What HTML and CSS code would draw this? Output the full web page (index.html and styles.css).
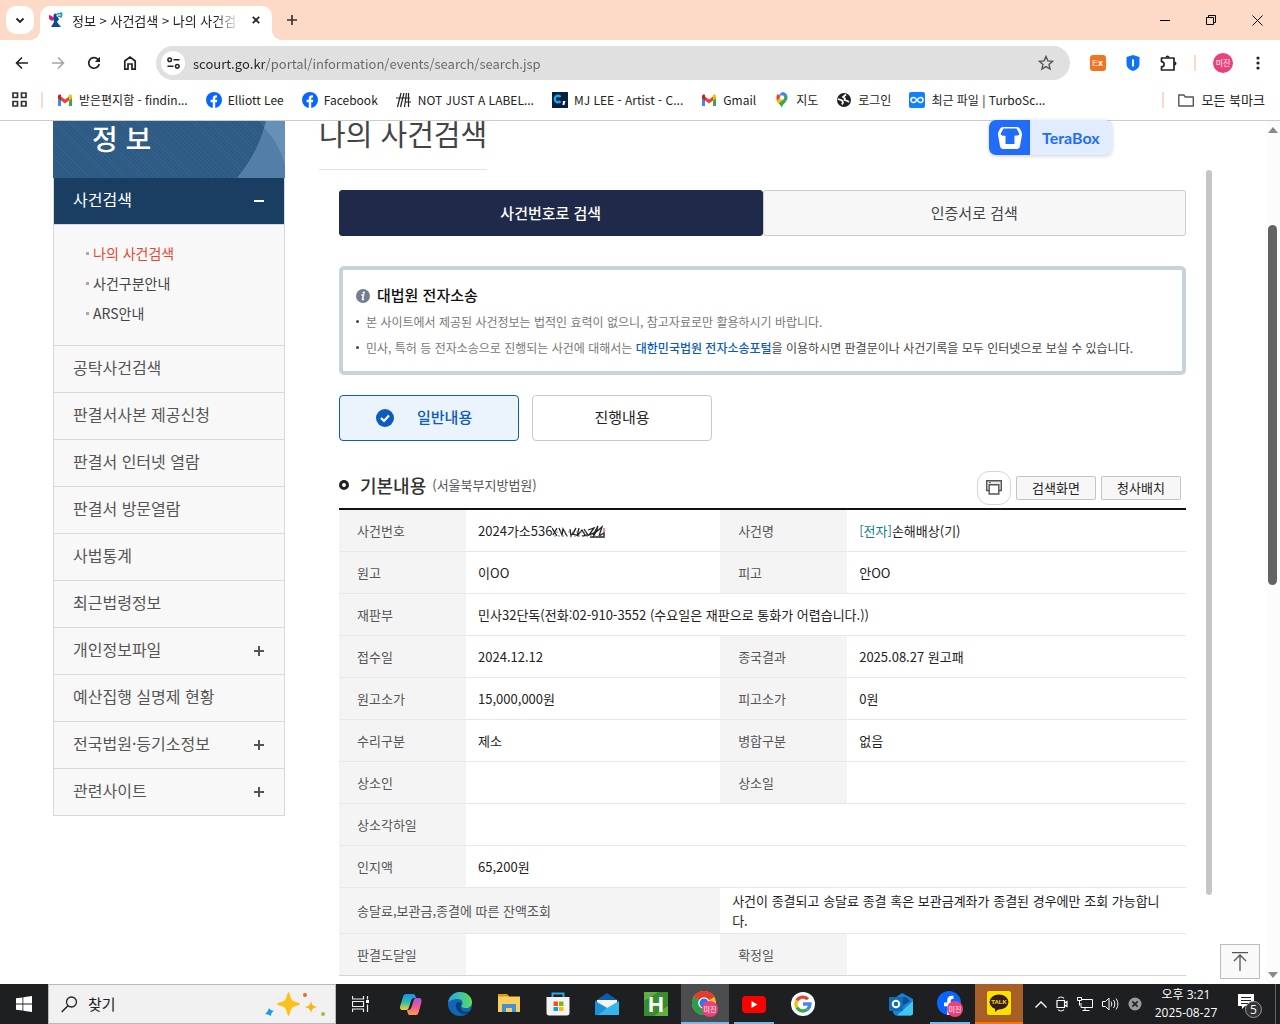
FILE: index.html
```
<!doctype html>
<html lang="ko">
<head>
    <meta charset="utf-8">
    <title>정보 &gt; 사건검색 &gt; 나의 사건검색</title>
    <link rel="stylesheet" href="styles.css">
</head>
<body>
    <!-- tab strip -->
    <div class="tabstrip">
        <button class="tab-search" aria-label="탭 검색"><svg width="10" height="10" viewBox="0 0 10 10"><path d="M1.5 3.5L5 7l3.5-3.500" fill="none" stroke="#222" stroke-width="1.800"/></svg></button>
        <div class="tab">
            <svg class="favicon" width="16" height="16" viewBox="0 0 16 16"><path d="M5 6l4-2 2 3-2 3 4 5H3l3-5z" fill="#0b4a94"/><path d="M6 1.500l3 .5-1 3-3 2z" fill="#0b4a94"/><path d="M1 3l3 1 2 3-2 2-3-2z" fill="#e0197d"/><path d="M9 2l5-1M10 4l4 1M14 1l-1 4M12 1l2 3" stroke="#16a0a8" stroke-width="1.300"/></svg>
            <span class="tab-title">정보 &gt; 사건검색 &gt; 나의 사건검색</span>
            <button class="tab-close" aria-label="탭 닫기"><svg width="8" height="8" viewBox="0 0 8 8"><path d="M.8.8l6.400 6.400M7.200.8L.8 7.200" stroke="#222" stroke-width="1.700"/></svg></button>
        </div>
        <button class="tab-new" aria-label="새 탭"><svg width="12" height="12" viewBox="0 0 12 12"><path d="M6 1v10M1 6h10" stroke="#333" stroke-width="1.700"/></svg></button>
        <div class="win-btns">
            <button aria-label="최소화"><svg width="10" height="10"><path d="M0 5.500h10" stroke="#000"/></svg></button>
            <button aria-label="이전 크기로"><svg width="10" height="10"><path d="M.5 2.500h7v7h-7zM2.500 2.500v-2h7v7h-2" fill="none" stroke="#000"/></svg></button>
            <button aria-label="닫기"><svg width="11" height="11"><path d="M.5.5l10 10M10.500.5l-10 10" stroke="#000"/></svg></button>
        </div>
    </div>

    <!-- toolbar -->
    <div class="toolbar">
        <button aria-label="뒤로"><svg width="14" height="14" viewBox="0 0 14 14"><path d="M13 7H2M7 1.500L1.500 7 7 12.500" fill="none" stroke="#222" stroke-width="1.600"/></svg></button>
        <button aria-label="앞으로"><svg width="14" height="14" viewBox="0 0 14 14"><path d="M1 7h11M7 1.500L12.500 7 7 12.500" fill="none" stroke="#a5a5a5" stroke-width="1.600"/></svg></button>
        <button aria-label="새로고침"><svg width="14" height="14" viewBox="0 0 14 14"><path d="M12.200 8A5.300 5.300 0 1 1 10.800 3.200L12 4.500" fill="none" stroke="#222" stroke-width="1.700"/><path d="M13 .8V6H7.800z" fill="#222"/></svg></button>
        <button aria-label="홈"><svg width="14" height="16" viewBox="0 0 14 16"><path d="M1.800 6L7 2l5.200 4v8.200H9V9H5v5.200H1.800z" fill="none" stroke="#222" stroke-width="1.700"/></svg></button>
        <div class="omnibox">
            <button class="site-info" aria-label="사이트 정보"><svg width="13" height="12" viewBox="0 0 13 12"><g fill="none" stroke="#222" stroke-width="1.500"><circle cx="2.700" cy="2.700" r="1.800"/><path d="M6.500 2.700h6M.5 9.300h6"/><circle cx="10.300" cy="9.300" r="1.800"/></g></svg></button>
            <input class="url" type="text" aria-label="주소창" value="scourt.go.kr/portal/information/events/search/search.jsp">
            <button class="star" aria-label="북마크"><svg width="16" height="16" viewBox="0 0 16 16"><path d="M8 1.500l1.900 4.400 4.700.4-3.600 3.100 1.100 4.700L8 11.600l-4.100 2.500L5 9.400 1.400 6.300l4.700-.4z" fill="none" stroke="#555" stroke-width="1.400"/></svg></button>
        </div>
        <div class="ext">
            <button aria-label="EX 확장"><svg width="16" height="16" viewBox="0 0 16 16"><rect width="16" height="16" rx="3" fill="#f27421"/><text x="2" y="11" font-size="9" fill="#fbc9a4" font-family="Liberation Sans, sans-serif" font-weight="bold">E<tspan fill="#fff">x</tspan></text></svg></button>
            <button aria-label="보안 확장"><svg width="14" height="16" viewBox="0 0 14 16"><path d="M7 0l6.500 2v7c0 3.500-3 6-6.500 7-3.500-1-6.500-3.500-6.500-7V2z" fill="#0f73f7"/><path d="M7 4.500v7" stroke="#fff" stroke-width="2"/></svg></button>
            <button aria-label="확장 프로그램"><svg width="17" height="17" viewBox="0 0 17 17"><path d="M1.500 3h12.500v12H1.500v-3.200a2.600 2.600 0 0 0 0-5.200z" fill="none" stroke="#222" stroke-width="1.700" stroke-linejoin="round"/><path d="M5.500 2.500a2 2 0 0 1 4 0zM14.500 6.500a2 2 0 0 1 0 4z" fill="#222"/></svg></button>
            <span class="bar"></span>
            <button class="avatar" aria-label="프로필">미진</button>
            <button class="menu" aria-label="메뉴"><svg width="4" height="14" viewBox="0 0 4 14" fill="#222"><circle cx="2" cy="2" r="1.600"/><circle cx="2" cy="7" r="1.600"/><circle cx="2" cy="12" r="1.600"/></svg></button>
        </div>
    </div>

    <!-- bookmarks -->
    <div class="bookmarks">
        <button class="apps" aria-label="앱"><svg width="15" height="15" viewBox="0 0 15 15"><path d="M1 1h4.500v4.500H1zM9.500 1H14v4.500H9.500zM1 9.500h4.500V14H1zM9.500 9.500H14V14H9.500z" fill="none" stroke="#333" stroke-width="1.700"/></svg></button>
        <span class="bar"></span>
        <a href="#"><svg width="16" height="16" viewBox="0 0 16 16"><path d="M1 14V4h3v10z" fill="#4285f4"/><path d="M12 14V4h3v10z" fill="#34a853"/><path d="M4 4.500l4 3 4-3v4l-4 3-4-3z" fill="#ea4335"/><path d="M1 4.500C1 2.500 3 2.200 4 3v5.500l-3-2.200z" fill="#c5221f"/><path d="M12 3c1-.8 3-.5 3 1.500v1.800l-3 2.200z" fill="#fbbc04"/></svg>받은편지함 - findin...</a>
        <a href="#"><svg width="16" height="16" viewBox="0 0 16 16"><circle cx="8" cy="8" r="8" fill="#0866ff"/><path d="M6.800 16V10.200H4.600V7.700h2.200V6.400c0-2.400 1.300-3.500 4.200-3.200v2.200C9.500 5.300 9.200 5.700 9.200 6.600v1.100h2.100l-.4 2.500H9.200V16z" fill="#fff"/></svg>Elliott Lee</a>
        <a href="#"><svg width="16" height="16" viewBox="0 0 16 16"><circle cx="8" cy="8" r="8" fill="#0866ff"/><path d="M6.800 16V10.200H4.600V7.700h2.200V6.400c0-2.400 1.300-3.500 4.200-3.200v2.200C9.500 5.300 9.200 5.700 9.200 6.600v1.100h2.100l-.4 2.500H9.200V16z" fill="#fff"/></svg>Facebook</a>
        <a href="#"><svg width="16" height="16" viewBox="0 0 16 16"><path d="M5 1L1.500 15M8 1L4.500 15M10.500 1L8.500 15M12.500 1v14M0 6h14M9 10h6" stroke="#222" stroke-width="1.200"/></svg>NOT JUST A LABEL...</a>
        <a href="#"><svg width="16" height="16" viewBox="0 0 16 16"><rect width="16" height="16" fill="#0b1f3f"/><path d="M8.500 5A3.200 3.200 0 1 0 8.500 9" fill="none" stroke="#10aef0" stroke-width="2.400"/><path d="M11 9h2.500l-1.200 4H10.500z" fill="#fff"/></svg>MJ LEE - Artist - C...</a>
        <a href="#"><svg width="16" height="16" viewBox="0 0 16 16"><path d="M1 14V4h3v10z" fill="#4285f4"/><path d="M12 14V4h3v10z" fill="#34a853"/><path d="M4 4.500l4 3 4-3v4l-4 3-4-3z" fill="#ea4335"/><path d="M1 4.500C1 2.500 3 2.200 4 3v5.500l-3-2.200z" fill="#c5221f"/><path d="M12 3c1-.8 3-.5 3 1.500v1.800l-3 2.200z" fill="#fbbc04"/></svg>Gmail</a>
        <a href="#"><svg width="16" height="16" viewBox="0 0 16 16"><path d="M8 16c0-4 5.500-6 5.500-10.500C13.500 4 13 3 12 2L4 11c2 2 3.500 3 4 5z" fill="#34a853"/><path d="M8 0c2 0 4 1 5 3L9 7 5 3z" fill="#4285f4"/><path d="M3.500 2L8 5.500 3.500 10C2 7 2 4 3.500 2z" fill="#ea4335"/><path d="M3 8.500L8 4l2 3-5.500 5z" fill="#fbbc04"/><circle cx="8" cy="5.500" r="2.200" fill="#fff"/></svg>지도</a>
        <a href="#"><svg width="16" height="16" viewBox="0 0 16 16"><circle cx="8" cy="8" r="7" fill="#202124"/><path d="M2 7l4 1.500 1 2-1 2M10 2.500L7 5l2 1.500L8.500 8l3 1 1.500 1" fill="none" stroke="#fff" stroke-width="1.700"/></svg>로그인</a>
        <a href="#"><svg width="16" height="16" viewBox="0 0 16 16"><rect width="16" height="16" rx="2" fill="#0f80ff"/><path d="M8 8C6.500 6 5.500 5.500 4.500 5.500a2.500 2.500 0 0 0 0 5C5.500 10.500 6.500 10 8 8s2.500-2.500 3.500-2.500a2.500 2.500 0 0 1 0 5C10.500 10.500 9.500 10 8 8z" fill="none" stroke="#fff" stroke-width="1.500"/></svg>최근 파일 | TurboSc...</a>
        <span class="bar bar-end"></span>
        <a href="#" class="all-marks"><svg width="16" height="16" viewBox="0 0 16 16"><path d="M.8 3h5l1.500 2h8v9H.8z" fill="none" stroke="#555" stroke-width="1.400" stroke-linejoin="round"/></svg>모든 북마크</a>
    </div>

    <!-- page -->
    <div class="viewport">
        <div class="page">
            <div class="lnb">
                <h2 class="lnb-head">
                    <svg width="48" height="57" viewBox="0 0 48 57"><path d="M29 0h19v57H0C15 39 24 20 29 0z" fill="#527ea7"/><path d="M22 0h9v7L25 4z" fill="#3a6893"/><path d="M29 0h19v45C44 30 38 18 27 7z" fill="#6690b5"/></svg>
                    <span>정 보</span>
                </h2>
                <ul class="lnb-list">
                    <li class="on">
                        <a href="#">사건검색<i class="minus"></i></a>
                        <ul class="lnb-sub">
                            <li class="cur"><a href="#">나의 사건검색</a></li>
                            <li><a href="#">사건구분안내</a></li>
                            <li><a href="#">ARS안내</a></li>
                        </ul>
                    </li>
                    <li><a href="#">공탁사건검색</a></li>
                    <li><a href="#">판결서사본 제공신청</a></li>
                    <li><a href="#">판결서 인터넷 열람</a></li>
                    <li><a href="#">판결서 방문열람</a></li>
                    <li><a href="#">사법통계</a></li>
                    <li><a href="#">최근법령정보</a></li>
                    <li><a href="#">개인정보파일<i class="plus"></i></a></li>
                    <li><a href="#">예산집행 실명제 현황</a></li>
                    <li><a href="#">전국법원·등기소정보<i class="plus"></i></a></li>
                    <li><a href="#">관련사이트<i class="plus"></i></a></li>
                </ul>
            </div>

            <div class="content">
                <h1>나의 사건검색</h1>
                <div class="frame">
                    <div class="frame-ct">
                        <div class="search-tab">
                            <button class="on">사건번호로 검색</button>
                            <button>인증서로 검색</button>
                        </div>
                        <div class="notice">
                            <h3><svg width="14" height="14" viewBox="0 0 14 14"><circle cx="7" cy="7" r="7" fill="#767c93"/><circle cx="7.800" cy="3.600" r="1.200" fill="#fff"/><path d="M5.300 6h2.200l-1 4.500h1.600" fill="none" stroke="#fff" stroke-width="1.500"/></svg>대법원 전자소송</h3>
                            <ul>
                                <li>본 사이트에서 제공된 사건정보는 법적인 효력이 없으니, 참고자료로만 활용하시기 바랍니다.</li>
                                <li>민사, 특허 등 전자소송으로 진행되는 사건에 대해서는 <a href="#">대한민국법원 전자소송포털</a><em>을 이용하시면 판결문이나 사건기록을 모두 인터넷으로 보실 수 있습니다.</em></li>
                            </ul>
                        </div>
                        <div class="view-tab">
                            <button class="on"><svg width="18" height="18" viewBox="0 0 18 18"><circle cx="9" cy="9" r="9" fill="#0b5cbe"/><path d="M5 9l3 3 5-5.500" fill="none" stroke="#fff" stroke-width="2.200"/></svg>일반내용</button>
                            <button>진행내용</button>
                        </div>
                        <div class="tbl-head">
                            <h4>기본내용</h4>
                            <span>(서울북부지방법원)</span>
                            <div class="btns">
                                <button class="print" aria-label="인쇄"><svg width="16" height="15" viewBox="0 0 16 15"><path d="M3 10.500H.7V.7h14.600v9.800H13" fill="#e9e9e9" stroke="#555" stroke-width="1.400"/><path d="M3.200 4.700h9.600v9.300H3.200z" fill="#fff" stroke="#555" stroke-width="1.400"/><path d="M3 2.700h2" stroke="#555"/></svg></button>
                                <button class="btn">검색화면</button>
                                <button class="btn">청사배치</button>
                            </div>
                        </div>
                        <table class="tbl">
                            <colgroup><col class="c-th"><col class="c-td"><col class="c-th"><col></colgroup>
                            <tr>
                                <th>사건번호</th>
                                <td>2024가소536<svg class="scribble" width="53" height="14" viewBox="0 0 53 14"><path d="M0 3l5 8M5 3l-4 7M7 3l3 7 1-6 4 7M18 4l1 7 5-8-3 6 6 2M27 3l-2 8 5-6 3 5M32 4l4 6-6 1M36 5l6-2-5 7 7-3-3 5M41 10l5-9-2 6 6-5-3 9 5-3v4H38" fill="none" stroke="#222" stroke-width="1.300"/><path d="M4 7h30M2 11h48" stroke="#888" stroke-dasharray="2 2"/><path d="M52 3v10" stroke="#a35"/></svg></td>
                                <th>사건명</th>
                                <td><b>[전자]</b>손해배상(기)</td>
                            </tr>
                            <tr><th>원고</th><td>이OO</td><th>피고</th><td>안OO</td></tr>
                            <tr><th>재판부</th><td colspan="3">민사32단독(전화:02-910-3552 (수요일은 재판으로 통화가 어렵습니다.))</td></tr>
                            <tr><th>접수일</th><td>2024.12.12</td><th>종국결과</th><td>2025.08.27 원고패</td></tr>
                            <tr><th>원고소가</th><td>15,000,000원</td><th>피고소가</th><td>0원</td></tr>
                            <tr><th>수리구분</th><td>제소</td><th>병합구분</th><td>없음</td></tr>
                            <tr><th>상소인</th><td></td><th>상소일</th><td></td></tr>
                            <tr><th>상소각하일</th><td colspan="3"></td></tr>
                            <tr><th>인지액</th><td colspan="3">65,200원</td></tr>
                            <tr class="tall"><th colspan="2">송달료,보관금,종결에 따른 잔액조회</th><td colspan="2">사건이 종결되고 송달료 종결 혹은 보관금계좌가 종결된 경우에만 조회 가능합니다.</td></tr>
                            <tr><th>판결도달일</th><td></td><th>확정일</th><td></td></tr>
                        </table>
                    </div>
                    <div class="frame-bar"></div>
                </div>
            </div>
        </div>

        <div class="scrollbar">
            <svg width="10" height="6"><path d="M0 6l5-6 5 6z" fill="#8a8a8a"/></svg>
            <div class="thumb"></div>
            <svg width="10" height="6"><path d="M0 0l5 6 5-6z" fill="#8a8a8a"/></svg>
        </div>

        <a class="terabox" href="#">
            <span class="tb-logo"><svg width="24" height="22" viewBox="0 0 24 22"><path d="M5 0h14c3 0 5 5 5 8l-2 11c-.4 2-1.500 3-3 3H5c-1.500 0-2.600-1-3-3L0 8c0-3 2-8 5-8z" fill="#fff"/><path d="M5.500 1.500h13L21.500 7c-.8 1.500-2.500 1.700-5 1.700V17h-9V8.700c-2.500 0-4.200-.2-5-1.700z" fill="#216cf8"/></svg></span>
            <span class="tb-text">TeraBox</span>
        </a>
        <a class="to-top" href="#" aria-label="맨 위로"><svg width="16" height="19" viewBox="0 0 16 19"><path d="M0 .7h16M8 19V4M2 9l6-6 6 6" fill="none" stroke="#555" stroke-width="1.300"/></svg></a>
    </div>

    <!-- taskbar -->
    <div class="taskbar">
        <button class="task" aria-label="시작"><svg width="16" height="16" viewBox="0 0 16 16" fill="#fff"><path d="M0 2.300l6.500-.9v6.100H0zM7.300 1.300L16 0v7.500H7.300zM0 8.400h6.500v6.200L0 13.700zM7.300 8.400H16V16l-8.700-1.200z"/></svg></button>
        <div class="find">
            <svg width="17" height="17" viewBox="0 0 17 17"><circle cx="10.500" cy="6" r="5" fill="none" stroke="#222" stroke-width="1.300"/><path d="M7 9.700L.7 16" stroke="#222" stroke-width="1.500"/></svg>
            <input type="text" aria-label="검색" placeholder="찾기">
            <svg width="60" height="25" viewBox="0 0 60 25"><path d="M23.500 0c1 0 2 6 3.500 8s8 2.500 8 4-6.500 2-8 4-2.500 8-3.500 8-2-6-3.500-8-8-2.500-8-4 6.500-2 8-4 2.500-8 3.500-8z" fill="#fcc21b"/><path d="M46 9c1 4 2 5 6 6-4 1-5 2-6 6-1-4-2-5-6-6 4-1 5-2 6-6z" fill="#f9b418"/><path d="M4 16c1 2 2 2.500 5 3-2 1-3 2-3 5-2-1-3-2-6-2 2-2 3-3 4-6z" fill="#169fe8"/><circle cx="40" cy="3" r="2" fill="#f0632c"/><circle cx="58" cy="22" r="2" fill="#8cc63f"/></svg>
        </div>
        <div class="tasks">
            <button class="task" aria-label="작업 보기"><svg width="17" height="16" viewBox="0 0 17 16"><path d="M.5 0v3h11V0M.5 5.500h11v5H.5zM.5 16v-3h11v3M15.500 0v3.500M15.500 8.500V16" fill="none" stroke="#eee" stroke-width="1.200"/><path d="M14 4h3v3h-3z" fill="#fff"/></svg></button>
            <button class="task" aria-label="Copilot"><svg width="24" height="22" viewBox="0 0 24 22"><defs><linearGradient id="cpA" x2="0" y2="1"><stop stop-color="#1c8ff0"/><stop offset=".5" stop-color="#2fb9b0"/><stop offset="1" stop-color="#f2d22e"/></linearGradient><linearGradient id="cpB" x2="0" y2="1"><stop stop-color="#a457e8"/><stop offset=".5" stop-color="#ee5a8e"/><stop offset="1" stop-color="#ff9a52"/></linearGradient></defs><path d="M7 1h7c2 0 2.500 2 3 4h-2c-2 0-2.500 1.500-3 3l-2 6c-.5 2-1 3-3 3H4c-3 0-3.500-2-2.500-5l2.500-8C4.600 1.800 5.500 1 7 1z" fill="url(#cpA)"/><path d="M17 22h-6c-2 0-2.500-2-3-5h1c2 0 3-1 3.500-3l2-6c.5-2 1-3 3-3h2c3 0 3.500 2 2.700 5l-2.500 9c-.5 2-1.200 3-2.700 3z" fill="url(#cpB)"/></svg></button>
            <button class="task" aria-label="Edge"><svg width="24" height="24" viewBox="0 0 24 24"><defs><linearGradient id="edA"><stop stop-color="#23a7e8"/><stop offset="1" stop-color="#5bdc5a"/></linearGradient></defs><circle cx="12" cy="12" r="12" fill="#1267b5"/><path d="M0 11C1 4 6 0 12 0c7 0 12 5 12 10 0 4-3 6-6 6-4 0-5-1.500-4-3 1.500-3 0-6-4-6-5 0-9 2-10 4z" fill="url(#edA)"/><path d="M8 12c-1 5 3 10 8 10 3 0 5-1.500 6.500-3-5 2-10 0-10-5 0-1 .5-1.500 1-2-1-3-5-2-5.500 0z" fill="#0b3f75"/></svg></button>
            <button class="task" aria-label="파일 탐색기"><svg width="22" height="20" viewBox="0 0 22 20"><path d="M0 0h9l2 2v5H0z" fill="#d99b10"/><path d="M0 2.500h22V18H0z" fill="#fccf5c"/><path d="M4 18v-8h14v8h-4v-4H8v4z" fill="#3e93d6"/></svg></button>
            <button class="task" aria-label="스토어"><svg width="24" height="24" viewBox="0 0 24 24"><path d="M6.500 6V1.500h11V6" fill="none" stroke="#28a8ea" stroke-width="2"/><path d="M.5 5h23v16c0 1.500-1 2.500-2.500 2.500H3C1.500 23.500.5 22.500.5 21z" fill="#f3f3f3"/><path d="M7.500 9.500H12V14H7.500z" fill="#f25022"/><path d="M13 9.500h4.500V14H13z" fill="#7fba00"/><path d="M7.500 15H12v4H7.500z" fill="#00a4ef"/><path d="M13 15h4.500v4H13z" fill="#ffb900"/></svg></button>
            <button class="task" aria-label="메일"><svg width="24" height="22" viewBox="0 0 24 22"><path d="M0 8l12-8 12 8z" fill="#0d5cab"/><path d="M2 7h20v9H2z" fill="#f3f3f3"/><path d="M0 8l12 7L24 8v14H0z" fill="#35b5ee"/><path d="M0 8l12 7-9 7H0z" fill="#1d90dc"/></svg></button>
            <button class="task" aria-label="H"><svg width="24" height="24" viewBox="0 0 24 24"><rect width="24" height="24" fill="#388e2f"/><path d="M0 0h14L0 9zM24 14v10H10z" fill="#61ad3f"/><text x="12" y="20" font-size="22" font-weight="bold" text-anchor="middle" fill="#fff" font-family="Liberation Sans, sans-serif">H</text></svg></button>
            <button class="task active run" aria-label="Chrome"><svg width="26" height="26" viewBox="0 0 26 26"><circle cx="12" cy="12" r="12" fill="#fbc116"/><path d="M12 12L1.600 6A12 12 0 0 1 22.400 6z" fill="#e33b2e"/><path d="M12 12L1.600 6A12 12 0 0 0 12 24l5-9z" fill="#289e49"/><circle cx="12" cy="12" r="5.800" fill="#fff"/><circle cx="12" cy="12" r="4.500" fill="#3078e8"/><circle cx="18" cy="18" r="8" fill="#ec407a"/><text x="18" y="21" font-size="7" text-anchor="middle" fill="#fff" font-family="Noto Sans CJK KR, sans-serif">미진</text></svg></button>
            <button class="task run" aria-label="YouTube"><svg width="24" height="17" viewBox="0 0 24 17"><rect width="24" height="17" rx="4" fill="#f00"/><path d="M9.500 5l6 3.500-6 3.500z" fill="#fff"/></svg></button>
            <button class="task" aria-label="Google"><svg width="24" height="24" viewBox="0 0 24 24"><circle cx="12" cy="12" r="12" fill="#fff"/><g fill="none" stroke-width="3.300"><path d="M17 7.200A7 7 0 0 0 5.900 8.500" stroke="#ea4335"/><path d="M5.900 8.500a7 7 0 0 0 0 7" stroke="#fbbc05"/><path d="M5.900 15.500A7 7 0 0 0 16.500 17.300" stroke="#34a853"/><path d="M16.500 17.300A7 7 0 0 0 19 12h-7" stroke="#4285f4"/></g></svg></button>
        </div>
        <div class="tasks tasks-end">
            <button class="task" aria-label="Outlook"><svg width="24" height="23" viewBox="0 0 24 23"><path d="M4 6l9-6 11 6v14c0 1.500-1 2.500-2.500 2.500h-15L4 20z" fill="#1783d8"/><path d="M24 8v12c0 1.500-1 2.500-2.500 2.500H8z" fill="#42c5ee"/><path d="M9 4h8l4 4-9 6z" fill="#0b4f96"/><rect y="4" width="14" height="14" rx="1" fill="#0f6cbd"/><circle cx="7" cy="11" r="3.300" fill="none" stroke="#fff" stroke-width="2"/></svg></button>
            <button class="task run" aria-label="Facebook"><svg width="26" height="26" viewBox="0 0 26 26"><circle cx="12" cy="12" r="12" fill="#0866ff"/><path d="M10.200 24v-8.700H7v-3.800h3.200V9.600C10.200 6 12.200 4.300 16.500 4.800v3.300C14.300 8 13.800 8.500 13.800 9.900v1.600H17l-.6 3.800h-2.600V24z" fill="#fff"/><circle cx="18" cy="18" r="8" fill="#ec407a"/><text x="18" y="21" font-size="7" text-anchor="middle" fill="#fff" font-family="Noto Sans CJK KR, sans-serif">미진</text></svg></button>
            <button class="task talk" aria-label="카카오톡"><svg width="24" height="24" viewBox="0 0 24 24"><rect width="24" height="24" rx="2" fill="#fae100"/><ellipse cx="12" cy="11" rx="9.500" ry="7.500" fill="#371d1e"/><path d="M8 16v5l5-4z" fill="#371d1e"/><text x="12" y="13" font-size="6" font-weight="bold" text-anchor="middle" fill="#fae100" font-family="Liberation Sans, sans-serif">TALK</text></svg></button>
        </div>
        <div class="tray">
            <svg width="12" height="7" viewBox="0 0 12 7"><path d="M.5 6.500L6 1l5.500 5.500" fill="none" stroke="#fff" stroke-width="1.300"/></svg>
            <svg width="12" height="16" viewBox="0 0 12 16"><path d="M1 4.500h7.500v7H1zM8.500 7l2.500-1.500v5L8.500 9M2 2.500C3.500.5 6.500.5 8 2.500M2 13.500c1.500 2 4.500 2 6 0" fill="none" stroke="#fff" stroke-width="1.200"/></svg>
            <svg width="16" height="14" viewBox="0 0 16 14"><path d="M5 2.500h10.500v8H4V6M8 10.500v3M5.500 13.500h7M.5.500h4v3h-4zM2.500 3.500v5" fill="none" stroke="#fff"/></svg>
            <svg width="17" height="14" viewBox="0 0 17 14"><path d="M.5 4.500h3L7 1v12L3.500 9.500h-3zM9 4.500c1 1.500 1 3.500 0 5M11.500 3c1.800 2.500 1.800 5.500 0 8M14 1.500c2.500 3.500 2.500 7.500 0 11" fill="none" stroke="#fff"/></svg>
            <svg width="14" height="14" viewBox="0 0 14 14"><circle cx="7" cy="7" r="6.500" fill="#999"/><path d="M4.300 4.300l5.400 5.400M9.700 4.300L4.300 9.700" stroke="#222" stroke-width="1.700"/></svg>
        </div>
        <div class="clock"><span>오후 3:21</span><span>2025-08-27</span></div>
        <button class="noti" aria-label="알림 5개"><svg width="24" height="24" viewBox="0 0 24 24"><path d="M0 0h16v12H7l-3 3v-3H0z" fill="#fff"/><path d="M3 3.500h10M3 6.500h10M3 9.500h7" stroke="#222"/><circle cx="15.500" cy="15.500" r="8" fill="#333" stroke="#999"/><text x="15.500" y="20" font-size="12" text-anchor="middle" fill="#fff" font-family="Open Sans, sans-serif">5</text></svg></button>
    </div>
</body>
</html>
```
FILE: styles.css
```
* {
    box-sizing:border-box;
}
html,body,ul,li,h1,h2,h3,h4 {
    padding:0;
    margin:0;
}
ul,li {
    list-style:none;
}
a {
    color:inherit;
    text-decoration:none;
}
button,input {
    padding:0;
    border:0;
    background:none;
    font:inherit;
    color:inherit;
}
svg {
    display:block;
    flex:none;
}
body {
    display:flex;
    flex-direction:column;
    height:100vh;
    overflow:hidden;
    background:#fff;
    color:#222;
    font-size:13px;
    font-family:'Noto Sans CJK KR','Liberation Sans',sans-serif;
}

/* browser */
.tabstrip {
    display:flex;
    align-items:center;
    height:40px;
    padding-left:6px;
    background:#fcdac7;
}
.tabstrip button {
    display:flex;
    align-items:center;
    justify-content:center;
}
.tabstrip .tab-search {
    width:28px;
    height:28px;
    border-radius:10px;
    background:#fff;
}
.tab {
    position:relative;
    display:flex;
    align-items:center;
    align-self:flex-end;
    width:232px;
    height:34px;
    margin-left:6px;
    padding:0 8px 6px;
    border-radius:10px 10px 0 0;
    background:#fff;
}
.tab:before,
.tab:after {
    content:'';
    position:absolute;
    bottom:0;
    width:10px;
    height:10px;
}
.tab:before {
    left:-10px;
    background:radial-gradient(circle at 0 0,#fcdac7 10px,#fff 10px);
}
.tab:after {
    right:-10px;
    background:radial-gradient(circle at 100% 0,#fcdac7 10px,#fff 10px);
}
.tab-title {
    flex:1;
    margin-left:8px;
    overflow:hidden;
    white-space:nowrap;
    -webkit-mask-image:linear-gradient(to right,#000 85%,transparent);
    mask-image:linear-gradient(to right,#000 85%,transparent);
}
.tabstrip .tab-close {
    width:16px;
    height:16px;
    margin-left:8px;
}
.tab-new {
    width:40px;
    height:28px;
}
.win-btns {
    display:flex;
    margin-left:auto;
}
.win-btns button {
    width:46px;
    height:40px;
}
.toolbar {
    display:flex;
    align-items:center;
    height:46px;
    padding:0 4px;
    background:#fff;
}
.toolbar > button {
    display:flex;
    justify-content:center;
    width:36px;
}
.omnibox {
    display:flex;
    align-items:center;
    flex:1;
    height:34px;
    margin-left:8px;
    padding:0 16px 0 5px;
    border-radius:17px;
    background:#e0e0e0;
}
.site-info {
    display:flex;
    align-items:center;
    justify-content:center;
    width:24px;
    height:24px;
    border-radius:50%;
    background:#fff;
}
/* host name dark, path grey */
.url {
    flex:1;
    margin-left:8px;
    font-size:13px;
    background:linear-gradient(to right,#222 72px,#666 72px);
    -webkit-background-clip:text;
    background-clip:text;
    -webkit-text-fill-color:transparent;
}
.ext {
    display:flex;
    align-items:center;
    gap:20px;
    padding:0 16px 0 20px;
}
.ext .bar {
    margin:0 -3px;
}
.ext .menu {
    margin-left:3px;
}
.bar {
    width:2px;
    height:16px;
    background:#fcdac7;
}
.avatar {
    width:20px;
    height:20px;
    border-radius:50%;
    background:#ec407a;
    color:#fff;
    font-size:8px;
    line-height:20px;
}
.bookmarks {
    display:flex;
    align-items:center;
    flex:none;
    gap:14px;
    height:35px;
    padding:0 15px 7px 12px;
    border-bottom:1px solid #ccc;
    font-size:12px;
    white-space:nowrap;
}
.bookmarks a {
    display:flex;
    align-items:center;
    gap:6px;
}
.bookmarks a + a {
    margin-left:4px;
}
.bookmarks .all-marks {
    gap:8px;
    font-size:13px;
}
.bar-end {
    margin-left:auto;
}

/* page */
.viewport {
    position:relative;
    display:flex;
    flex:1;
    min-height:0;
}
.page {
    display:flex;
    flex:1;
    gap:34px;
    padding:0 53px;
    overflow:hidden;
}
.scrollbar {
    display:flex;
    flex-direction:column;
    align-items:center;
    width:15px;
    padding:6px 0;
    background:#fcfcfc;
}
.thumb {
    width:9px;
    height:360px;
    margin:92px 0 auto;
    border-radius:5px;
    background:#636363;
}

.lnb {
    width:232px;
    flex:none;
}
.lnb-head {
    display:flex;
    flex-direction:row-reverse;
    justify-content:space-between;
    height:57px;
    padding-left:39px;
    color:#fff;
    font-size:28px;
    font-weight:500;
    line-height:34px;
    background:repeating-linear-gradient(45deg,#2d5a83 0 2px,#34618a 2px 3px);
}
.lnb-list {
    border:1px solid #d3dae4;
    border-top:0;
}
.lnb-list > li {
    border-top:1px solid #d3dae4;
    background:#f8f8f8;
}
.lnb-list > li > a {
    display:flex;
    align-items:center;
    justify-content:space-between;
    height:46px;
    padding:0 20px 4px 19px;
    color:#555;
    font-size:16px;
}
.lnb-list > li.on {
    border-top:0;
}
.lnb-list > li.on > a {
    color:#fff;
    background:#1a3e62;
}
.minus,
.plus {
    width:10px;
    height:10px;
    margin-top:4px;
    background:linear-gradient(#fff,#fff) center/10px 2px no-repeat;
}
.plus {
    background:linear-gradient(#555,#555) center/10px 2px no-repeat,linear-gradient(#555,#555) center/2px 10px no-repeat;
}
.lnb-sub {
    padding:13px 0 17px 32px;
    border-top:1px solid #d3dae4;
}
.lnb-sub li {
    display:flex;
    align-items:center;
    gap:4px;
    height:30px;
    color:#444;
    font-size:14px;
}
.lnb-sub li:before {
    content:'';
    width:3px;
    height:3px;
    background:#aaa;
}
.lnb-sub .cur {
    color:#e8452f;
}

.content {
    flex:1;
    min-width:0;
}
h1 {
    display:table;
    height:49px;
    border-bottom:1px solid #e2e2e2;
    color:#444;
    font-size:29px;
    font-weight:400;
    line-height:24px;
}
.frame {
    display:flex;
    gap:20px;
    padding-left:20px;
}
.frame-ct {
    flex:1;
    min-width:0;
    padding-top:20px;
}
.frame-bar {
    width:6px;
    height:725px;
    border-radius:3px;
    background:#c6c6c6;
}
.search-tab {
    display:flex;
}
.search-tab button {
    flex:1;
    height:46px;
    padding-bottom:2px;
    border:1px solid #ccc;
    border-radius:3px;
    background:#f7f7f7;
    color:#444;
    font-size:15px;
}
.search-tab .on {
    border-color:#1f2a4b;
    background:#1f2a4b;
    color:#fff;
    font-weight:500;
}
.notice {
    margin-top:30px;
    padding:10px 13px 11px;
    border:4px solid #cad1de;
    border-radius:5px;
}
.notice h3 {
    display:flex;
    align-items:center;
    gap:7px;
    height:28px;
    color:#111;
    font-size:15px;
    font-weight:500;
}
.notice h3 svg {
    margin-top:4px;
}
.notice li {
    display:flex;
    align-items:center;
    height:26px;
    color:#777;
    font-size:12px;
    white-space:pre;
}
.notice li:before {
    content:'';
    flex:none;
    width:3px;
    height:3px;
    margin-right:7px;
    border-radius:50%;
    background:#444;
}
.notice a {
    color:#0b5cbe;
    font-weight:500;
}
.notice em {
    color:#444;
    font-style:normal;
}
.view-tab {
    display:flex;
    gap:13px;
    margin-top:20px;
}
.view-tab button {
    display:flex;
    align-items:center;
    justify-content:center;
    width:180px;
    height:46px;
    padding-bottom:4px;
    border:1px solid #c8c8c8;
    border-radius:4px;
    background:#fff;
    font-size:15px;
}
.view-tab .on {
    justify-content:flex-start;
    gap:23px;
    padding-left:36px;
    border-color:#0b5cbe;
    background:#ebf3fc;
    color:#0b5cbe;
    font-weight:500;
}
.view-tab svg {
    margin-top:4px;
}
.tbl-head {
    display:flex;
    align-items:center;
    gap:6px;
    height:67px;
    padding:20px 5px 0 0;
    color:#555;
}
.tbl-head h4 {
    display:flex;
    align-items:center;
    gap:11px;
    color:#333;
    font-size:18px;
    font-weight:500;
}
.tbl-head h4:before {
    content:'';
    width:4px;
    height:4px;
    border:3px solid #222;
    border-radius:50%;
}
.btns {
    display:flex;
    align-items:center;
    gap:5px;
    margin-left:auto;
    padding-top:6px;
    color:#222;
}
.print {
    display:flex;
    align-items:center;
    justify-content:center;
    width:34px;
    height:34px;
    border:1px solid #d5d5d5;
    border-radius:12px;
}
.btn {
    width:80px;
    height:24px;
    border:1px solid #c5c5c5;
    border-radius:2px;
    background:#f7f7f7;
    line-height:20px;
}
.tbl {
    width:100%;
    border-top:2px solid #111;
    border-bottom:1px solid #d5d5d5;
    border-spacing:0;
    table-layout:fixed;
}
.c-th {
    width:15%;
}
.c-td {
    width:30%;
}
.tbl th,
.tbl td {
    height:42px;
    padding:0 12px;
    border-bottom:1px solid #e8e8e8;
    line-height:20px;
    text-align:left;
    font-weight:400;
}
.tbl th {
    padding:0 18px;
    color:#555;
    background:#f4f4f4;
}
.tbl .tall td {
    height:46px;
}
.tbl tr:last-child th,
.tbl tr:last-child td {
    height:41px;
    border-bottom:0;
}
.tbl b {
    color:#0d7f93;
    font-weight:400;
}
.scribble {
    display:inline-block;
    vertical-align:middle;
}

.terabox {
    position:absolute;
    top:-1px;
    left:989px;
    display:flex;
    height:35px;
    border-radius:7px;
    overflow:hidden;
    background:#e1edfe;
    color:#216cf8;
    box-shadow:0 1px 4px rgba(0,0,0,.2);
}
.tb-logo {
    display:flex;
    align-items:center;
    padding:0 8px 0 9px;
    background:#216cf8;
}
.tb-text {
    padding:0 12px;
    font:bold 16px/35px Lato,sans-serif;
}
.to-top {
    position:absolute;
    right:20px;
    bottom:5px;
    display:flex;
    align-items:center;
    justify-content:center;
    width:40px;
    height:35px;
    border:1px solid #bbb;
    background:#f9f9f9;
}

/* windows taskbar */
.taskbar {
    display:flex;
    flex:none;
    height:40px;
    background:#1d1f21;
    color:#fff;
}
.task {
    display:flex;
    align-items:center;
    justify-content:center;
    width:48px;
    height:40px;
}
.find {
    display:flex;
    align-items:center;
    width:288px;
    padding:0 10px 0 12px;
    border:1px solid #bbb;
    background:#f1f1f1;
}
.find input {
    flex:1;
    min-width:0;
    margin-left:10px;
    padding-bottom:2px;
    font-size:15px;
}
.find input::placeholder {
    color:#222;
}
.tasks {
    display:flex;
    gap:1px;
}
.tasks .task:first-child {
    margin-right:2px;
}
.tasks-end {
    margin-left:auto;
}
.tasks-end .task:first-child {
    margin-right:0;
}
.run {
    background:linear-gradient(#76b9ed,#76b9ed) center bottom/40px 2px no-repeat;
}
.active {
    background:linear-gradient(#76b9ed,#76b9ed) center bottom/48px 2px no-repeat #4c4d4e;
}
.talk {
    border-bottom:2px solid #ff7300;
    background:#a85f26;
}
.tray {
    display:flex;
    align-items:center;
    gap:9px;
    padding:0 10px 0 12px;
}
.clock {
    display:flex;
    flex-direction:column;
    justify-content:center;
    width:68px;
    font-family:'Open Sans','Noto Sans CJK KR',sans-serif;
    font-size:12px;
    line-height:18px;
    text-align:center;
}
.noti {
    margin:0 4px 0 18px;
    padding:4px 13px 0 0;
    border-right:1px solid #666;
}
```
